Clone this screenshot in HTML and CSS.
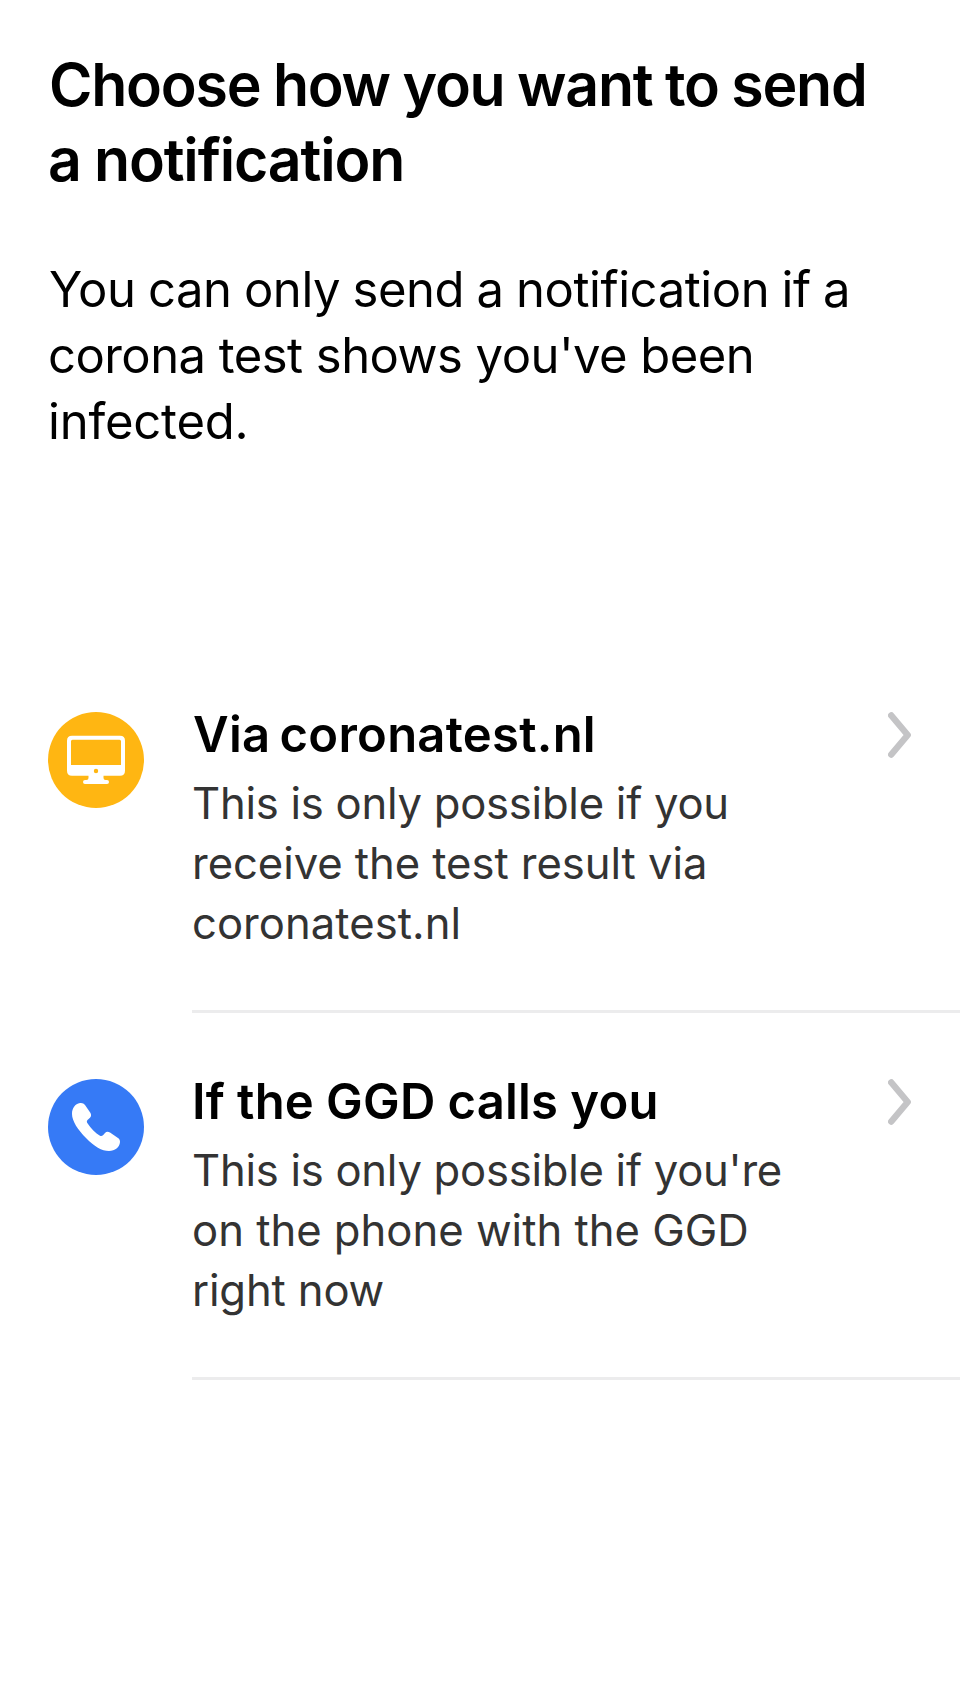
FILE: index.html
```html
<!DOCTYPE html>
<html lang="en"><head><meta charset="utf-8"><title>Send a notification</title><link rel="stylesheet" href="styles.css"></head>
<body>
<main class="page">
<h1 class="title"><span class="line t1">Choose how you want to send</span><span class="line t2">a notification</span></h1>
<p class="intro"><span class="line i1">You can only send a notification if a</span><span class="line i2">corona test shows you've been</span><span class="line i3">infected.</span></p>
<section class="options">
<article class="option">
<svg class="icon" viewBox="0 0 96 96"><circle cx="48" cy="48" r="48" fill="#ffb612"/><path fill="#fff" fill-rule="evenodd" d="M24 23.8H72Q77 23.8 77 28.8V58.8Q77 63.8 72 63.8H24Q19 63.8 19 58.8V28.8Q19 23.8 24 23.8ZM24.5 27.8Q23 27.8 23 29.3V53H73V29.3Q73 27.8 71.5 27.8ZM48 56.8A2.2 2.2 0 1 0 48 61.2A2.2 2.2 0 1 0 48 56.8Z"/><path fill="#fff" d="M40.5 63H55.5V66Q55.5 68 57.5 68H59A2 2 0 0 1 59 72H37A2 2 0 0 1 37 68H38.5Q40.5 68 40.5 66Z"/></svg>
<div class="body"><div class="text"><h2 class="name"><span class="line n1">Via coronatest.nl</span></h2><p class="desc"><span class="line d1">This is only possible if you</span><span class="line d2">receive the test result via</span><span class="line d3">coronatest.nl</span></p></div>
<svg class="chevron" viewBox="0 0 24 48"><path d="M3.3 3.5L19.7 23L3.3 42.5"/></svg></div>
</article>
<article class="option">
<svg class="icon" viewBox="0 0 96 96"><circle cx="48" cy="48" r="48" fill="#367af6"/><path fill="#fff" d="M32 24C34 23.6 36 24.5 37 26L42.5 34C43.5 36 43.2 37.5 42 38.8L39.5 41C38.7 42 38.7 43 39.3 44C43 49.5 47.5 54 52 56.8C53 57.3 54 57.2 55 56.3L57 54C58.5 52.5 60 52.5 62 53.5L70 59C71.5 60 72 61 72 63C71.5 68.5 67 72 61 72C54 72 46 67.5 38 59C30 51 24 42 24 35C24 29 27 25 32 24Z"/></svg>
<div class="body"><div class="text"><h2 class="name"><span class="line n2">If the GGD calls you</span></h2><p class="desc"><span class="line d4">This is only possible if you're</span><span class="line d5">on the phone with the GGD</span><span class="line d6">right now</span></p></div>
<svg class="chevron" viewBox="0 0 24 48"><path d="M3.3 3.5L19.7 23L3.3 42.5"/></svg></div>
</article>
</section>
</main>
</body></html>
```
FILE: styles.css
```css
* { box-sizing: border-box; }
body { margin: 0; background: #fff; color: #000; font-family: Inter, sans-serif; }
h1, h2, p { margin: 0; }
.page { min-height: 1704px; padding-top: 47px; overflow: hidden; }
.line { display: block; width: max-content; white-space: nowrap; }
.title { padding-left: 49px; font-size: 59px; font-weight: 600; line-height: 75px; }
.t1 { letter-spacing: -1.24px; word-spacing: -1px; }
.t2 { margin-left: -1px; letter-spacing: -1.15px; word-spacing: -.5px; }
.intro { margin-top: 60px; padding-left: 48px; font-size: 49px; line-height: 66px; }
.i1 { padding-left: 1px; letter-spacing: -.43px; word-spacing: -1px; }
.i2 { letter-spacing: -.55px; }
.i3 { letter-spacing: -.2px; }
.options { margin-top: 191px; }
.option { display: flex; height: 367px; padding-left: 48px; gap: 48px; }
.icon { width: 96px; height: 96px; margin-top: 66px; flex: none; }
.body { display: flex; flex: 1; justify-content: space-between; padding-right: 48px; border-bottom: 3px solid #ececed; }
.name { margin-top: 59px; font-size: 49px; font-weight: 600; line-height: 60px; }
.n1 { padding-left: 1px; letter-spacing: .25px; word-spacing: -3.4px; }
.n2 { letter-spacing: .2px; word-spacing: -.5px; }
.desc { margin-top: 9px; font-size: 43.6px; line-height: 60px; color: #333; }
.d1 { letter-spacing: -.25px; }
.d2 { letter-spacing: -.06px; }
.d3 { letter-spacing: .04px; }
.d4 { letter-spacing: -.26px; }
.d5 { letter-spacing: 0; }
.d6 { letter-spacing: -.15px; }
.chevron { width: 24px; height: 48px; margin-top: 66px; flex: none; fill: none; stroke: #c4c4c6; stroke-width: 6.5; stroke-linecap: round; stroke-linejoin: round; }
```
